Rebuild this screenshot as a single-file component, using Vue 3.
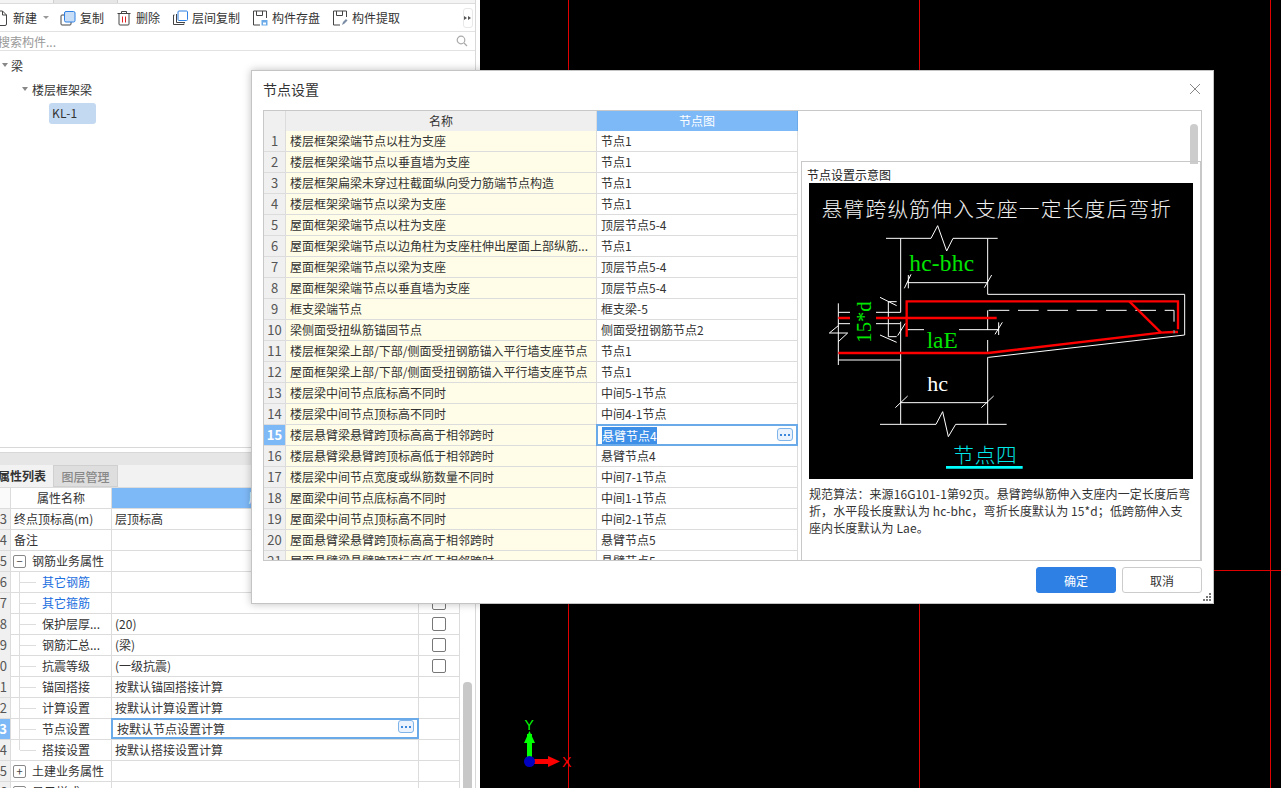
<script setup>
const toolbarItems = [
  { label: '复制', icon: 'copy' },
  { label: '删除', icon: 'trash' },
  { label: '层间复制', icon: 'layers' },
  { label: '构件存盘', icon: 'save' },
  { label: '构件提取', icon: 'pick' },
]

const propRows = [
  { id: 23, name: '终点顶标高(m)', value: '层顶标高' },
  { id: 24, name: '备注', value: '' },
  { id: 25, name: '钢筋业务属性', value: '', group: 'minus' },
  { id: 26, name: '其它钢筋', value: '', child: true, blue: true },
  { id: 27, name: '其它箍筋', value: '', child: true, blue: true, check: true },
  { id: 28, name: '保护层厚...', value: '(20)', child: true, check: true },
  { id: 29, name: '钢筋汇总...', value: '(梁)', child: true, check: true },
  { id: 30, name: '抗震等级', value: '(一级抗震)', child: true, check: true },
  { id: 31, name: '锚固搭接', value: '按默认锚固搭接计算', child: true },
  { id: 32, name: '计算设置', value: '按默认计算设置计算', child: true },
  { id: 33, name: '节点设置', value: '按默认节点设置计算', child: true, active: true },
  { id: 34, name: '搭接设置', value: '按默认搭接设置计算', child: true, last: true },
  { id: 35, name: '土建业务属性', value: '', group: 'plus' },
  { id: 36, name: '显示样式', value: '', group: 'plus' },
]

const nodeRows = [
  ['楼层框架梁端节点以柱为支座', '节点1'],
  ['楼层框架梁端节点以垂直墙为支座', '节点1'],
  ['楼层框架扁梁未穿过柱截面纵向受力筋端节点构造', '节点1'],
  ['楼层框架梁端节点以梁为支座', '节点1'],
  ['屋面框架梁端节点以柱为支座', '顶层节点5-4'],
  ['屋面框架梁端节点以边角柱为支座柱伸出屋面上部纵筋...', '节点1'],
  ['屋面框架梁端节点以梁为支座', '顶层节点5-4'],
  ['屋面框架梁端节点以垂直墙为支座', '顶层节点5-4'],
  ['框支梁端节点', '框支梁-5'],
  ['梁侧面受扭纵筋锚固节点', '侧面受扭钢筋节点2'],
  ['楼层框架梁上部/下部/侧面受扭钢筋锚入平行墙支座节点', '节点1'],
  ['屋面框架梁上部/下部/侧面受扭钢筋锚入平行墙支座节点', '节点1'],
  ['楼层梁中间节点底标高不同时', '中间5-1节点'],
  ['楼层梁中间节点顶标高不同时', '中间4-1节点'],
  ['楼层悬臂梁悬臂跨顶标高高于相邻跨时', '悬臂节点4'],
  ['楼层悬臂梁悬臂跨顶标高低于相邻跨时', '悬臂节点4'],
  ['楼层梁中间节点宽度或纵筋数量不同时', '中间7-1节点'],
  ['屋面梁中间节点底标高不同时', '中间1-1节点'],
  ['屋面梁中间节点顶标高不同时', '中间2-1节点'],
  ['屋面悬臂梁悬臂跨顶标高高于相邻跨时', '悬臂节点5'],
  ['屋面悬臂梁悬臂跨顶标高低于相邻跨时', '悬臂节点5'],
]

const selectedNode = 15
</script>

<template>
  <div class="page">
    <aside class="left">
      <div class="left-inner">
        <section class="upper">
          <div class="tab-strip"><span class="strip-tab"></span></div>
          <div class="toolbar">
            <div class="tool first">
              <svg class="ico" viewBox="0 0 16 16">
                <path d="M2.5 1h7l4 4v9a1.500 1.500 0 0 1-1.500 1.500h-8A1.500 1.500 0 0 1 2.500 14z" fill="none" stroke="#444" />
                <path d="M9.500 1v4h4" fill="none" stroke="#444" />
              </svg>
              <span>新建</span>
              <i class="caret"></i>
            </div>
            <div v-for="item in toolbarItems" :key="item.label" class="tool">
              <svg class="ico" viewBox="0 0 16 16">
                <template v-if="item.icon === 'copy'">
                  <path d="M4 5H2a1 1 0 0 0-1 1v8a1 1 0 0 0 1 1h8a1 1 0 0 0 1-1v-2" fill="none" stroke="#444" />
                  <rect x="4.500" y="1.500" width="10.500" height="10.500" rx="1.500" fill="#c8def6" stroke="#2e80e4" />
                </template>
                <template v-else-if="item.icon === 'trash'">
                  <path d="M5.500 3V1.500h5V3M1.500 3.500h13M3 3.500V14a1 1 0 0 0 1 1h8a1 1 0 0 0 1-1V3.500" fill="none" stroke="#444" />
                  <path d="M6.500 6.500v6M9.500 6.500v6" stroke="#e02020" />
                </template>
                <template v-else-if="item.icon === 'layers'">
                  <path d="M2.500 5H1.500v9.500H12V13.500M4.500 4v8.500H13" fill="none" stroke="#444" />
                  <rect x="6" y="1" width="9.500" height="9.500" rx="1" fill="#fff" stroke="#2e80e4" />
                </template>
                <template v-else-if="item.icon === 'save'">
                  <path d="M8 15H1.500V1h13v7M4.500 1v4.500h6V1" fill="none" stroke="#444" />
                  <rect x="9.500" y="10" width="6" height="5.500" fill="#6aaae8" />
                  <rect x="11" y="12.500" width="3" height="2" fill="#fff" />
                </template>
                <template v-else>
                  <path d="M8 15H1.500V1h13v6M4.500 1v4.500h6V1" fill="none" stroke="#444" />
                  <path d="M10 15l1-3 3-3 1.500 1.500-3 3z" fill="#7a8ba5" />
                </template>
              </svg>
              <span>{{ item.label }}</span>
            </div>
            <div class="more-btn">
              <i></i><i></i>
            </div>
          </div>
          <div class="search">
            <span class="placeholder">搜索构件...</span>
            <svg class="search-ico" viewBox="0 0 12 12">
              <circle cx="5" cy="5" r="3.800" fill="none" stroke="#aaa" stroke-width="1.200" />
              <path d="M8 8l3 3" stroke="#aaa" stroke-width="1.200" />
            </svg>
          </div>
          <div class="tree">
            <div class="tree-row lvl-0"><i class="tree-caret"></i>梁</div>
            <div class="tree-row lvl-1"><i class="tree-caret"></i>楼层框架梁</div>
            <div class="tree-row lvl-2"><span class="chip">KL-1</span></div>
          </div>
        </section>

        <section class="lower">
          <div class="band"></div>
          <div class="lower-tabs">
            <span class="ltab on">属性列表</span>
            <span class="ltab">图层管理</span>
          </div>
          <div class="prop-body">
            <div class="prop-table">
              <div class="prop-row head">
                <div class="p-idx"></div>
                <div class="p-name center">属性名称</div>
                <div class="p-val center blue-head">属性值</div>
                <div class="p-chk"></div>
              </div>
              <div v-for="row in propRows" :key="row.id" class="prop-row">
                <div class="p-idx" :class="{ 'idx-on': row.active }"><span>{{ row.id }}</span></div>
                <div class="p-name" :class="{ child: row.child, last: row.last, blue: row.blue, grouped: row.group }">
                  <span v-if="row.group" class="box">{{ row.group === 'minus' ? '−' : '+' }}</span>
                  {{ row.name }}
                </div>
                <div class="p-val" :class="{ editing: row.active }">
                  <span>{{ row.value }}</span>
                  <button v-if="row.active" class="dots"><i></i><i></i><i></i></button>
                </div>
                <div class="p-chk center"><span v-if="row.check" class="check"></span></div>
              </div>
            </div>
            <div class="prop-scroll"><div class="prop-thumb"></div></div>
          </div>
        </section>
      </div>
    </aside>

    <main class="canvas">
      <i class="grid-v" style="left: 88px"></i>
      <i class="grid-v" style="left: 439px"></i>
      <i class="grid-v" style="left: 790px"></i>
      <i class="grid-h"></i>
      <svg class="axes" viewBox="0 0 60 60">
        <path d="M14.500 46V19" stroke="#00ff00" stroke-width="5" />
        <path d="M14.500 16l5.500 12H9z" fill="#00ff00" />
        <path d="M19 46.500h14" stroke="#ff0000" stroke-width="5" />
        <path d="M45 46.500l-12-5.500v11z" fill="#ff0000" />
        <circle cx="14.500" cy="46.500" r="5.500" fill="#0000c0" />
        <text x="9.500" y="15" class="ax-y">Y</text>
        <text x="47" y="52" class="ax-x">X</text>
      </svg>
    </main>

    <div class="dialog">
      <header class="dlg-head">
        <span>节点设置</span>
        <svg class="close" viewBox="0 0 12 12">
          <path d="M1 1l10 10M11 1L1 11" stroke="#888" stroke-width="1" fill="none" />
        </svg>
      </header>
      <div class="dlg-body">
        <div class="node-table">
          <div class="node-row head">
            <div class="n-idx"></div>
            <div class="n-name center">名称</div>
            <div class="n-val center head-blue">节点图</div>
          </div>
          <div v-for="(row, i) in nodeRows" :key="i" class="node-row">
            <div class="n-idx" :class="{ 'idx-on': i + 1 === selectedNode }">{{ i + 1 }}</div>
            <div class="n-name">{{ row[0] }}</div>
            <div class="n-val" :class="{ editing: i + 1 === selectedNode }">
              <span :class="{ picked: i + 1 === selectedNode }">{{ row[1] }}</span>
              <button v-if="i + 1 === selectedNode" class="dots"><i></i><i></i><i></i></button>
            </div>
          </div>
        </div>
        <div class="side">
          <div class="side-top"><div class="side-thumb"></div></div>
          <div class="preview">
            <div class="preview-title">节点设置示意图</div>
            <svg class="drawing" viewBox="27 69 1152 888">
              <rect x="27" y="69" width="1152" height="888" fill="#000" />
              <text x="65" y="172" class="d-title" textLength="1048">悬臂跨纵筋伸入支座一定长度后弯折</text>
              <g fill="none" stroke="#fff" stroke-width="3">
                <path d="M258 235H393L413 197L440 273L459 235H593" />
                <path d="M302 235V457H228M150 457H115" />
                <path d="M563 235V403H1154V525L566 592H563V793" />
                <path d="M302 485V793" />
                <path d="M240 793H408L428 755L445 830L467 793H620" />
                <path d="M563 451V510M563 540V575" />
                <path d="M566 451H1122V520" stroke-dasharray="62 26" />
                <path d="M322 368H563M313 385L333 343M553 383L575 345M325 345V385" />
                <path d="M320 509H372M477 509H597M293 527L316 490M585 523L607 487M596 487V525" />
                <path d="M302 728H563M286 743L323 708M544 743L581 708" />
                <path d="M115 430V615M115 600H302M115 491H150M228 491H300" />
                <path d="M265 425V530M240 412L290 437M240 525L290 547M265 425H290M265 530H290" />
                <path d="M115 497L88 519H143L115 545" />
              </g>
              <g fill="none" stroke="#f00" stroke-width="7">
                <path d="M320 530V424H1134V508" />
                <path d="M115 474H150M228 474H590" />
                <path d="M115 579H565L1083 518L1120 516M1125 516H1134" />
                <path d="M988 424L1083 518" />
              </g>
              <text x="328" y="333" class="d-green" textLength="194">hc-bhc</text>
              <text x="380" y="563" class="d-green" textLength="93">laE</text>
              <text transform="translate(212 548) rotate(-90)" class="d-green small" textLength="124">15*d</text>
              <text x="382" y="693" class="d-white" textLength="62">hc</text>
              <text x="460" y="908" class="d-cyan" textLength="190">节点四</text>
              <path d="M438 922H668" stroke="#00ffff" stroke-width="8" />
            </svg>
            <p class="rule">规范算法：来源16G101-1第92页。悬臂跨纵筋伸入支座内一定长度后弯<br />折，水平段长度默认为 hc-bhc，弯折长度默认为 15*d；低跨筋伸入支<br />座内长度默认为 Lae。</p>
          </div>
        </div>
      </div>
      <footer class="dlg-foot">
        <button class="btn primary">确定</button>
        <button class="btn">取消</button>
      </footer>
      <svg class="grip" viewBox="0 0 10 10">
        <g fill="#777">
          <rect x="7" y="1" width="2" height="2" />
          <rect x="4" y="4" width="2" height="2" />
          <rect x="7" y="4" width="2" height="2" />
          <rect x="1" y="7" width="2" height="2" />
          <rect x="4" y="7" width="2" height="2" />
          <rect x="7" y="7" width="2" height="2" />
        </g>
      </svg>
    </div>
  </div>
</template>

<style>
html,
body {
  margin: 0;
  background: #000;
}
</style>

<style scoped>
.page {
  position: relative;
  display: flex;
  width: 1281px;
  height: 788px;
  overflow: hidden;
  font-family: "Noto Sans CJK SC", "Liberation Sans", sans-serif;
  font-size: 12px;
  color: #333;
}

.left {
  width: 480px;
  flex: none;
  background: #fff;
}

.left-inner {
  width: 476px;
  height: 100%;
  box-sizing: border-box;
  border-right: 1px solid #d8d8d8;
  display: flex;
  flex-direction: column;
  overflow: hidden;
}

.upper {
  flex: 1;
  min-height: 0;
}

.tab-strip {
  height: 3px;
  background: #f4f4f4;
  border-bottom: 1px solid #dcdcdc;
  padding-left: 53px;
}

.strip-tab {
  display: block;
  width: 65px;
  height: 3px;
  background: #e6e6e6;
  box-sizing: border-box;
  border-left: 1px solid #d0d0d0;
  border-right: 1px solid #d0d0d0;
}

.toolbar {
  height: 27px;
  display: flex;
  align-items: center;
  gap: 12px;
  border-bottom: 1px solid #e2e2e2;
}

.tool {
  display: flex;
  align-items: center;
  gap: 4px;
  line-height: 19px;
}

.tool.first {
  margin-left: -7px;
  margin-right: -1px;
}

.ico {
  width: 16px;
  height: 16px;
  flex: none;
}

.caret {
  width: 0;
  height: 0;
  margin-left: 2px;
  border-left: 3px solid transparent;
  border-right: 3px solid transparent;
  border-top: 3px solid #999;
}

.more-btn {
  margin-left: auto;
  margin-right: 2px;
  width: 10px;
  height: 20px;
  box-sizing: border-box;
  border: 1px solid #e8e8e8;
  border-radius: 3px;
  display: flex;
  align-items: center;
  justify-content: center;
}

.more-btn i {
  width: 0;
  height: 0;
  border-top: 2.500px solid transparent;
  border-bottom: 2.500px solid transparent;
  border-left: 3px solid #555;
  margin-right: 1px;
}

.search {
  height: 18px;
  display: flex;
  align-items: center;
  justify-content: space-between;
  padding-right: 7px;
  border-bottom: 1px solid #e2e2e2;
}

.placeholder {
  margin-left: -2px;
  color: #999;
}

.search-ico {
  width: 12px;
  height: 12px;
}

.tree {
  padding-top: 2px;
  color: #333;
}

.tree-row {
  display: flex;
  align-items: center;
  height: 24px;
}

.lvl-0 {
  padding-left: 2px;
}

.lvl-1 {
  padding-left: 22px;
}

.lvl-1 .tree-caret {
  margin-right: 4px;
}

.lvl-2 {
  padding-left: 49px;
}

.tree-caret {
  width: 0;
  height: 0;
  margin-right: 3px;
  border-left: 3.500px solid transparent;
  border-right: 3.500px solid transparent;
  border-top: 4px solid #888;
}

.chip {
  width: 47px;
  height: 21px;
  line-height: 20px;
  padding-left: 3px;
  box-sizing: border-box;
  background: #c3d9f2;
  border-radius: 3px;
  letter-spacing: 0.3px;
}

.lower {
  flex: none;
  height: 340px;
  border-top: 1px solid #d8d8d8;
  display: flex;
  flex-direction: column;
}

.band {
  margin-top: 4px;
  height: 12px;
  background: #e6e6e6;
  border-top: 1px solid #d8d8d8;
}

.lower-tabs {
  height: 23px;
  display: flex;
  background: #f2f2f2;
  box-sizing: border-box;
  border-bottom: 1px solid #dcdcdc;
}

.ltab {
  width: 65px;
  box-sizing: border-box;
  line-height: 21px;
  text-align: center;
  color: #888;
  background: #dedede;
  border: 1px solid #d0d0d0;
  font-weight: 500;
}

.ltab.on {
  width: 53px;
  text-align: right;
  padding-right: 7px;
  color: #333;
  background: #f2f2f2;
  border: none;
  font-weight: 700;
  white-space: nowrap;
  overflow: hidden;
  direction: rtl;
}

.prop-body {
  display: flex;
  flex: 1;
  min-height: 0;
  overflow: hidden;
}

.prop-table {
  width: 460px;
  flex: none;
}

.prop-row {
  display: grid;
  grid-template-columns: 11px 101px 307px 41px;
  height: 21px;
  box-sizing: border-box;
  border-bottom: 1px solid #dcdcdc;
  line-height: 20px;
}

.prop-row > div {
  box-sizing: border-box;
  border-right: 1px solid #dcdcdc;
  position: relative;
  min-width: 0;
}

.center {
  text-align: center;
}

.p-idx {
  display: flex;
  justify-content: flex-end;
  padding-right: 3px;
  overflow: hidden;
  background: #f0f0f0;
  color: #555;
  font-size: 13px;
}

.prop-row.head .p-idx {
  background: #fafafa;
}

.idx-on {
  background: #7eb9f7;
  color: #fff;
  font-weight: 700;
}

.p-name {
  padding-left: 3px;
  white-space: nowrap;
}

.p-name.center {
  padding-left: 0;
}

.p-name.blue {
  color: #1c6fe0;
}

.p-name.child {
  padding-left: 31px;
}

.p-name.grouped {
  padding-left: 2px;
  display: flex;
  align-items: center;
  gap: 6px;
}

.p-name.child::before {
  content: "";
  position: absolute;
  left: 8px;
  top: 0;
  bottom: -1px;
  border-left: 1px solid #ddd;
}

.p-name.child.last::before {
  bottom: 10px;
}

.p-name.child::after {
  content: "";
  position: absolute;
  left: 9px;
  width: 16px;
  top: 10px;
  border-top: 1px solid #ddd;
}

.box {
  width: 11px;
  height: 11px;
  flex: none;
  border: 1px solid #888;
  border-radius: 2px;
  text-align: center;
  line-height: 10px;
  font-size: 11px;
  color: #444;
}

.p-val {
  padding-left: 3px;
  white-space: nowrap;
}

.blue-head {
  background: #7eb9f7;
  color: #fff;
}

.p-val.editing {
  margin: -1px 0 -1px -1px;
  height: 21px;
  border: 2px solid #6aaae8 !important;
  padding-left: 4px;
  line-height: 17px;
  background: #fff;
  z-index: 1;
}

.dots {
  position: absolute;
  right: 3px;
  top: 0;
  width: 16px;
  height: 13px;
  padding: 0;
  background: #eaf3fd;
  border: 1px solid #7eb4ea;
  border-radius: 3px;
  display: flex;
  align-items: center;
  justify-content: center;
  gap: 2px;
}

.dots i {
  width: 2px;
  height: 2px;
  background: #3a87dc;
}

.check {
  display: inline-block;
  width: 12px;
  height: 12px;
  margin-top: 3px;
  border: 1px solid #777;
  border-radius: 2px;
  background: #fff;
}

.prop-scroll {
  flex: 1;
  position: relative;
}

.prop-thumb {
  position: absolute;
  left: 3px;
  top: 194px;
  width: 9px;
  height: 200px;
  background: #c8c8c8;
  border-radius: 4px;
}

.canvas {
  flex: 1;
  position: relative;
  background: #000;
}

.grid-v {
  position: absolute;
  top: 0;
  bottom: 0;
  width: 1px;
  background: #e00000;
}

.grid-h {
  position: absolute;
  left: 0;
  right: 0;
  top: 570px;
  height: 1px;
  background: #e00000;
}

.axes {
  position: absolute;
  left: 35px;
  top: 715px;
  width: 60px;
  height: 60px;
}

.ax-y {
  fill: #00ff00;
  font-family: "Liberation Sans", sans-serif;
  font-size: 14px;
}

.ax-x {
  fill: #ff0000;
  font-family: "Liberation Sans", sans-serif;
  font-size: 14px;
}

.dialog {
  position: absolute;
  left: 251px;
  top: 70px;
  width: 963px;
  height: 534px;
  box-sizing: border-box;
  display: flex;
  flex-direction: column;
  padding: 0 11px;
  background: #fff;
  border: 1px solid #c4c4c4;
  box-shadow: 0 0 8px rgba(0, 0, 0, 0.25);
}

.dlg-head {
  height: 39px;
  flex: none;
  display: flex;
  align-items: center;
  justify-content: space-between;
  padding-bottom: 4px;
  box-sizing: border-box;
  font-size: 14px;
  color: #333;
}

.close {
  width: 12px;
  height: 12px;
  margin-right: 1px;
}

.dlg-body {
  height: 451px;
  flex: none;
  display: flex;
  box-sizing: border-box;
  border: 1px solid #c8c8c8;
  overflow: hidden;
}

.node-table {
  width: 534px;
  flex: none;
}

.node-row {
  display: grid;
  grid-template-columns: 22px 311px 201px;
  height: 21px;
  box-sizing: border-box;
  border-bottom: 1px solid #dcdcdc;
  line-height: 20px;
}

.node-row.head {
  height: 20px;
  background: #efefef;
  border-bottom-color: #c8c8c8;
}

.node-row > div {
  box-sizing: border-box;
  border-right: 1px solid #dcdcdc;
  position: relative;
  white-space: nowrap;
}

.n-idx {
  background: #f0f0f0;
  color: #555;
  text-align: center;
  font-size: 13px;
}

.n-idx.idx-on {
  background: #7eb9f7;
  color: #fff;
  font-weight: 700;
}

.n-name {
  padding-left: 4px;
  background: #fffde8;
}

.node-row.head .n-name {
  padding-left: 0;
  background: #efefef;
}

.n-val {
  padding-left: 4px;
}

.head-blue {
  background: #7eb9f7;
  color: #fff;
  padding: 0;
  border-right: 1px solid #6aaae8 !important;
}

.n-val.editing {
  margin: -1px 0 -1px -1px;
  height: 22px;
  border: 2px solid #6aaae8 !important;
  padding-left: 4px;
  line-height: 19px;
  z-index: 1;
}

.picked {
  background: #3d8fe8;
  color: #fff;
}

.n-val .dots {
  top: 2px;
}

.side {
  flex: 1;
  min-width: 0;
  display: flex;
  flex-direction: column;
}

.side-top {
  height: 50px;
  flex: none;
  position: relative;
}

.side-thumb {
  position: absolute;
  right: 3px;
  top: 13px;
  width: 8px;
  height: 40px;
  background: #cccccc;
  border-radius: 4px 4px 0 0;
}

.preview {
  flex: 1;
  margin-left: 3px;
  padding: 4px 0 0 5px;
  border-top: 1px solid #c8c8c8;
  border-left: 1px solid #c8c8c8;
  border-right: 1px solid #c8c8c8;
  position: relative;
}

.preview-title {
  line-height: 17px;
  color: #222;
}

.drawing {
  display: block;
  width: 384px;
  height: 296px;
  margin-left: 2px;
}

.d-title {
  fill: #f0f0f0;
  font-size: 62px;
  font-weight: 300;
  font-family: "Noto Sans CJK SC", sans-serif;
}

.d-green {
  fill: #00e600;
  font-size: 70px;
  font-family: "Liberation Serif", serif;
}

.d-green.small {
  font-size: 62px;
}

.d-white {
  fill: #fff;
  font-size: 66px;
  font-family: "Liberation Serif", serif;
}

.d-cyan {
  fill: #00e8e8;
  font-size: 62px;
  font-weight: 300;
  font-family: "Noto Sans CJK SC", sans-serif;
}

.rule {
  margin: 6px 0 0 2px;
  line-height: 17px;
  color: #333;
  white-space: nowrap;
  letter-spacing: 0.1px;
}

.dlg-foot {
  flex: 1;
  display: flex;
  justify-content: flex-end;
  gap: 6px;
  padding-top: 6px;
}

.btn {
  width: 80px;
  height: 26px;
  padding: 0;
  font-family: inherit;
  font-size: 12px;
  color: #333;
  background: #fff;
  border: 1px solid #ccc;
  border-radius: 3px;
}

.btn.primary {
  background: #2e80e4;
  border-color: #2e80e4;
  color: #fff;
}

.grip {
  position: absolute;
  right: 1px;
  bottom: 1px;
  width: 10px;
  height: 10px;
}
</style>
